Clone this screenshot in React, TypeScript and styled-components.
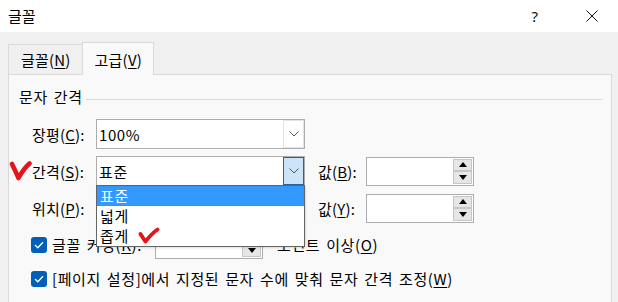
import React from 'react';
import styled, { createGlobalStyle } from 'styled-components';

const GlobalStyle = createGlobalStyle`
  html, body {
    margin: 0;
    padding: 0;
    background: #f0f0f0;
  }
  body {
    font-family: 'Noto Sans CJK KR', 'Noto Sans', sans-serif;
    font-size: 15px;
    letter-spacing: 0.6px;
    word-spacing: 2px;
    color: #000;
  }
  * {
    box-sizing: border-box;
  }
`;

const Window = styled.div`
  width: 618px;
  height: 302px;
  display: flex;
  flex-direction: column;
  overflow: hidden;
  background: #f0f0f0;
`;

const TitleBar = styled.header`
  height: 32px;
  flex: none;
  background: #fff;
  display: flex;
  align-items: center;
  justify-content: space-between;
  padding: 0 3px 0 8px;
`;

const Title = styled.span`
  font-size: 15px;
  line-height: 20px;
  letter-spacing: 0;
`;

const TitleControls = styled.div`
  display: flex;
  gap: 11px;
  height: 100%;
`;

const TitleButton = styled.div`
  width: 46px;
  display: flex;
  align-items: center;
  justify-content: center;
  font-family: 'Noto Sans', 'Liberation Sans', sans-serif;
  font-size: 15px;
  color: #111;
`;

const Body = styled.main`
  flex: 1;
  min-height: 0;
  display: flex;
  flex-direction: column;
  padding: 10px 6px 0 8px;
`;

const TabStrip = styled.div`
  height: 32px;
  flex: none;
  display: flex;
  align-items: flex-end;
`;

const Tab = styled.div<{ $active?: boolean }>`
  position: relative;
  z-index: ${({ $active }) => ($active ? 1 : 0)};
  height: ${({ $active }) => ($active ? 33 : 30)}px;
  margin-bottom: ${({ $active }) => ($active ? -1 : 0)}px;
  padding: 0 11px 0 12px;
  display: flex;
  align-items: center;
  letter-spacing: 0.2px;
  background: ${({ $active }) => ($active ? '#f9f9f9' : '#f0f0f0')};
  border: 1px solid #d9d9d9;
  border-bottom: none;
  border-right: ${({ $active }) => ($active ? '1px solid #d9d9d9' : 'none')};
`;

const Panel = styled.section`
  flex: 1;
  display: flex;
  flex-direction: column;
  align-items: flex-start;
  background: #f9f9f9;
  border: 1px solid #d9d9d9;
  border-bottom: none;
  padding: 12px 9px 0 10px;
`;

const GroupHeader = styled.div`
  width: 100%;
  display: flex;
  align-items: center;
  line-height: 20px;
`;

const GroupRule = styled.div`
  flex: 1;
  height: 1px;
  margin: 4px 0 0 3px;
  background: #dcdcdc;
`;

const FieldGrid = styled.div`
  margin: 12px 0 0 13px;
  display: grid;
  grid-template-columns: 64px 209px 61px 108px;
  grid-auto-rows: 30px;
  row-gap: 7px;
  align-items: center;
`;

const FieldLabel = styled.label<{ $indent?: number }>`
  position: relative;
  padding-left: ${({ $indent }) => $indent ?? 0}px;
  white-space: nowrap;
  letter-spacing: 0.2px;
`;

const U = styled.span`
  text-decoration: underline;
  text-underline-offset: 2px;
`;

const Combo = styled.div`
  position: relative;
  height: 100%;
  display: flex;
  align-items: center;
  background: #fff;
  border: 1px solid #adadad;
`;

const ComboValue = styled.span`
  flex: 1;
  padding-left: 2px;
`;

const ComboButton = styled.div<{ $active?: boolean }>`
  width: 21px;
  height: 100%;
  display: flex;
  align-items: center;
  justify-content: center;
  background: ${({ $active }) => ($active ? '#cce4f7' : '#fff')};
  border: 1px solid ${({ $active }) => ($active ? '#2a6395' : '#e3e3e3')};
`;

const DropList = styled.ul`
  position: absolute;
  z-index: 10;
  top: 100%;
  left: -1px;
  right: -1px;
  margin: 0;
  padding: 0;
  list-style: none;
  background: #fff;
  border: 1px solid #646464;
  box-shadow: 1px 1px 2px rgba(0, 0, 0, 0.12);
`;

const DropItem = styled.li<{ $selected?: boolean }>`
  height: 20px;
  display: flex;
  align-items: center;
  padding-left: 3px;
  line-height: 20px;
  background: ${({ $selected }) => ($selected ? '#3399ff' : 'transparent')};
  color: ${({ $selected }) => ($selected ? '#fff' : '#000')};
  outline: ${({ $selected }) => ($selected ? '1px dotted #b8742f' : 'none')};
  outline-offset: -1px;
`;

const SpinBox = styled.div<{ $width?: number }>`
  width: ${({ $width }) => $width ?? 108}px;
  height: 29px;
  display: flex;
  justify-content: flex-end;
  padding: 1px;
  background: #fff;
  border: 1px solid #adadad;
`;

const SpinButtons = styled.div`
  width: 19px;
  display: flex;
  flex-direction: column;
`;

const SpinButton = styled.div`
  flex: 1;
  display: flex;
  align-items: center;
  justify-content: center;
  background: #e6e6e6;
  border: 1px solid #c6c6c6;
`;

const CheckRow = styled.div<{ $top: number }>`
  display: flex;
  align-items: center;
  margin: ${({ $top }) => $top}px 0 0 12px;
  white-space: nowrap;
`;

const Checkbox = styled.span`
  width: 16px;
  height: 16px;
  flex: none;
  margin-right: 5px;
  display: flex;
  align-items: center;
  justify-content: center;
  border-radius: 3px;
  background: #005fb8;
`;

const KerningLabel = styled.span`
  width: 103px;
`;

const Suffix = styled.span`
  margin-left: 14px;
`;

const RedV = styled.svg`
  position: absolute;
  left: -23px;
  top: 50%;
  margin-top: -10px;
`;

const RedCheck = styled.svg`
  margin-left: 9px;
  margin-top: -2px;
`;

const Chevron = () => (
  <svg width="10" height="6" viewBox="0 0 10 6">
    <path d="M0.5 0.5 L5 5 L9.5 0.5" fill="none" stroke="#555" strokeWidth="1" />
  </svg>
);

const Triangle = ({ up }: { up?: boolean }) => (
  <svg width="8" height="5" viewBox="0 0 8 5">
    <path d={up ? 'M0 5 L4 0 L8 5 Z' : 'M0 0 L8 0 L4 5 Z'} fill="#000" />
  </svg>
);

const Spinner = ({ width }: { width?: number }) => (
  <SpinBox $width={width}>
    <SpinButtons>
      <SpinButton>
        <Triangle up />
      </SpinButton>
      <SpinButton>
        <Triangle />
      </SpinButton>
    </SpinButtons>
  </SpinBox>
);

const Tick = () => (
  <svg width="10" height="8" viewBox="0 0 10 8">
    <path d="M1 4 L3.8 6.8 L9 1.2" fill="none" stroke="#fff" strokeWidth="1.3" />
  </svg>
);

const App: React.FC = () => (
  <>
    <GlobalStyle />
    <Window>
      <TitleBar>
        <Title>글꼴</Title>
        <TitleControls>
          <TitleButton>?</TitleButton>
          <TitleButton>
            <svg width="12" height="12" viewBox="0 0 12 12">
              <path d="M0.5 0.5 L11.5 11.5 M11.5 0.5 L0.5 11.5" stroke="#111" strokeWidth="1" />
            </svg>
          </TitleButton>
        </TitleControls>
      </TitleBar>
      <Body>
        <TabStrip>
          <Tab>
            글꼴(<U>N</U>)
          </Tab>
          <Tab $active>
            고급(<U>V</U>)
          </Tab>
        </TabStrip>
        <Panel>
          <GroupHeader>
            문자 간격
            <GroupRule />
          </GroupHeader>
          <FieldGrid>
            <FieldLabel>
              장평(<U>C</U>):
            </FieldLabel>
            <Combo>
              <ComboValue>100%</ComboValue>
              <ComboButton>
                <Chevron />
              </ComboButton>
            </Combo>
            <span />
            <span />

            <FieldLabel>
              <RedV width="23" height="20" viewBox="0 0 23 20">
                <path
                  d="M3 3 C5 7 7 11.5 9.5 17 C12.5 11.5 16 6.5 20.5 2.5"
                  fill="none"
                  stroke="#e3151d"
                  strokeWidth="4.6"
                  strokeLinecap="round"
                  strokeLinejoin="round"
                />
              </RedV>
              간격(<U>S</U>):
            </FieldLabel>
            <Combo>
              <ComboValue>표준</ComboValue>
              <ComboButton $active>
                <Chevron />
              </ComboButton>
              <DropList>
                <DropItem $selected>표준</DropItem>
                <DropItem>넓게</DropItem>
                <DropItem>
                  좁게
                  <RedCheck width="22" height="17" viewBox="0 0 22 17">
                    <path
                      d="M2.5 7 C4 9.5 5.5 12 7.5 14.5 C11 10 14.5 6 19.5 2.5"
                      fill="none"
                      stroke="#e3151d"
                      strokeWidth="3.8"
                      strokeLinecap="round"
                      strokeLinejoin="round"
                    />
                  </RedCheck>
                </DropItem>
              </DropList>
            </Combo>
            <FieldLabel $indent={13}>
              값(<U>B</U>):
            </FieldLabel>
            <Spinner />

            <FieldLabel>
              위치(<U>P</U>):
            </FieldLabel>
            <Combo>
              <ComboValue />
              <ComboButton>
                <Chevron />
              </ComboButton>
            </Combo>
            <FieldLabel $indent={13}>
              값(<U>Y</U>):
            </FieldLabel>
            <Spinner />
          </FieldGrid>

          <CheckRow $top={7}>
            <Checkbox>
              <Tick />
            </Checkbox>
            <KerningLabel>
              글꼴 커닝(<U>K</U>):
            </KerningLabel>
            <Spinner />
            <Suffix>
              포인트 이상(<U>O</U>)
            </Suffix>
          </CheckRow>

          <CheckRow $top={9}>
            <Checkbox>
              <Tick />
            </Checkbox>
            [페이지 설정]에서 지정된 문자 수에 맞춰 문자 간격 조정(<U>W</U>)
          </CheckRow>
        </Panel>
      </Body>
    </Window>
  </>
);

export default App;
